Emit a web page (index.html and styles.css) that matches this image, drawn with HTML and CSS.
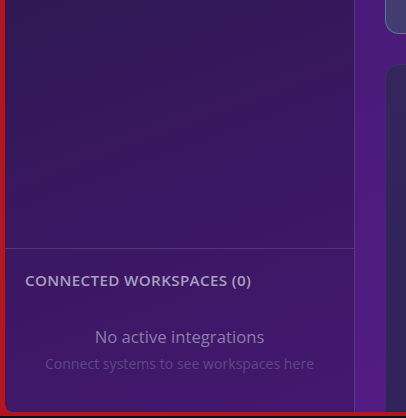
FILE: index.html
```html
<!DOCTYPE html>
<html>
<head>
<meta charset="utf-8">
<link rel="stylesheet" href="styles.css">
</head>
<body>
<div class="frame">
  <div class="app">
    <aside class="panel">
      <div class="panel-top"></div>
      <section class="workspaces">
        <h2 class="ws-title">CONNECTED WORKSPACES (0)</h2>
        <div class="empty">
          <p class="empty-main">No active integrations</p>
          <p class="empty-sub">Connect systems to see workspaces here</p>
        </div>
      </section>
    </aside>
    <div class="gutter"></div>
    <main class="side">
      <div class="card card-top"></div>
      <div class="card card-main"></div>
    </main>
  </div>
</div>
</body>
</html>
```
FILE: styles.css
```css
html, body {
  margin: 0;
  padding: 0;
  background: #10101a;
  height: 418px;
  overflow: hidden;
  font-family: "Open Sans", "Noto Sans", sans-serif;
}
.frame {
  height: 412px;
  padding: 0 0 4px 5px;
  background: #b2161f;
}
.app {
  display: flex;
  height: 412px;
  background: linear-gradient(160deg, #461a74 0%, #531c84 100%);
  border-bottom-left-radius: 8px;
  overflow: hidden;
}
.panel {
  width: 349px;
  flex: none;
  display: flex;
  flex-direction: column;
  background: linear-gradient(160deg, #2e1953 0%, #3b1762 45%, #44186f 100%);
  border-right: 1px solid #553a80;
  border-bottom-left-radius: 8px;
}
.panel-top {
  height: 248px;
  flex: none;
  border-bottom: 1px solid #553878;
}
.workspaces {
  flex: 1;
  padding: 22px 20px 0 20px;
}
.ws-title {
  margin: 0;
  font-size: 15.2px;
  font-weight: 600;
  letter-spacing: 0.35px;
  color: #a99fbf;
  line-height: 18px;
}
.empty {
  margin-top: 37px;
  text-align: center;
}
.empty-main {
  margin: 0;
  font-size: 16.7px;
  line-height: 22px;
  color: #8a7ea8;
}
.empty-sub {
  margin: 6px 0 0;
  font-size: 14.1px;
  line-height: 20px;
  color: #5b4a84;
}
.gutter {
  width: 30px;
  flex: none;
}
.side {
  flex: 1;
  display: flex;
  flex-direction: column;
  gap: 30px;
  margin-top: -20px;
}
.card {
  border-radius: 14px 0 0 14px;
}
.card-top {
  height: 52px;
  flex: none;
  background: #433c70;
  border: 1px solid #4e7f95;
  border-right: none;
}
.card-main {
  flex: 1;
  background: linear-gradient(180deg, #34255c 0%, #30245a 100%);
  border: 1px solid #3f2d6a;
  border-right: none;
  border-bottom: none;
  border-bottom-left-radius: 0;
}
```
